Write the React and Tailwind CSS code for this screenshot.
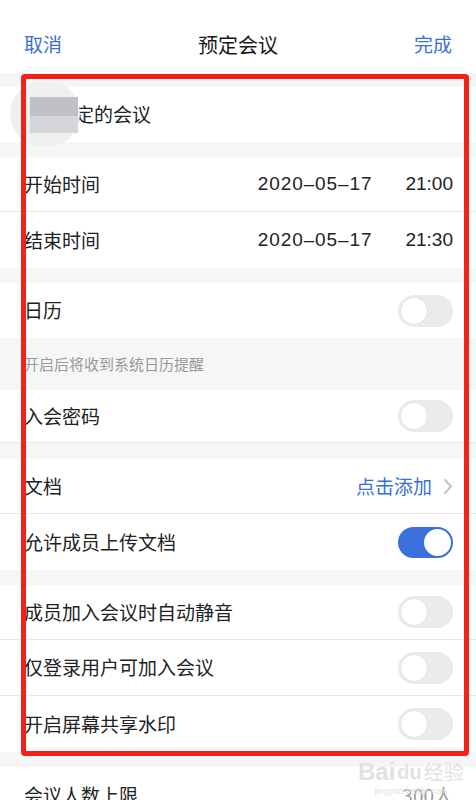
import React from 'react';

const font = { fontFamily: '"Noto Sans CJK SC", "Noto Sans", sans-serif' };
const latin = { fontFamily: '"Liberation Sans", "Noto Sans CJK SC", sans-serif' };

function Toggle({ on }) {
  return on ? (
    <div className="w-[55px] h-[31px] rounded-full bg-[#3b6fdc] flex items-center justify-end pr-[2px]">
      <div className="w-[27px] h-[27px] rounded-full bg-white" />
    </div>
  ) : (
    <div className="w-[55px] h-[32px] rounded-full bg-[#ebebed] flex items-center pl-[2px]">
      <div className="w-[28px] h-[28px] rounded-full bg-white border border-[#e3e3e3]" />
    </div>
  );
}

function Row({ h, label, divider, children }) {
  return (
    <div className={`${h} bg-white flex items-center justify-between pl-[24px] pr-[23px] ${divider ? 'border-b border-[#e8e8e8]' : ''}`}>
      <span className="text-[19px] text-[#222]">{label}</span>
      {children}
    </div>
  );
}

function DateTime({ date, time }) {
  return (
    <div className="flex gap-[33px] text-[19px] text-[#222]" style={latin}>
      <span className="tracking-[0.9px]">{date}</span>
      <span>{time}</span>
    </div>
  );
}

export default function App() {
  return (
    <div className="relative w-[476px] h-[800px] overflow-hidden bg-[#f6f6f7]" style={font}>
      {/* header */}
      <div className="h-[73px] bg-white pt-[16px] px-[24px] flex items-center justify-between">
        <span className="text-[19px] text-[#3a6fd8]">取消</span>
        <span className="text-[20px] text-[#1a1a1a]">预定会议</span>
        <span className="text-[19px] text-[#3a6fd8]">完成</span>
      </div>

      <div className="mt-[14px] relative h-[55px] bg-white flex items-center pl-[56px]">
        <div className="absolute left-[10px] top-[-6px] w-[70px] h-[66px] rounded-full bg-[#f0f0f1]" />
        <span className="text-[19px] text-[#222]">预定的会议</span>
        <div className="absolute left-[30px] top-[10px] w-[48px] h-[19px] bg-[#c0c0c5]" />
        <div className="absolute left-[30px] top-[29px] w-[48px] h-[17px] bg-[#d6d6da]" />
      </div>

      <div className="mt-[15px]">
        <Row h="h-[55px]" label="开始时间" divider>
          <DateTime date="2020–05–17" time="21:00" />
        </Row>
        <Row h="h-[56px]" label="结束时间">
          <DateTime date="2020–05–17" time="21:30" />
        </Row>
      </div>

      <div className="mt-[15px]">
        <Row h="h-[55px]" label="日历">
          <Toggle />
        </Row>
        <div className="h-[52px] flex items-center pl-[24px] text-[15px] text-[#999]">开启后将收到系统日历提醒</div>
        <Row h="h-[53px]" label="入会密码" divider>
          <Toggle />
        </Row>
      </div>

      <div className="mt-[16px]">
        <Row h="h-[55px]" label="文档" divider>
          <div className="flex items-center gap-[11px]">
            <span className="text-[19px] text-[#3a6fd8]">点击添加</span>
            <svg width="10" height="17" viewBox="0 0 10 17" fill="none">
              <path d="M2 2l6 6.5-6 6.5" stroke="#c4c4c6" strokeWidth="2" strokeLinecap="round" strokeLinejoin="round" />
            </svg>
          </div>
        </Row>
        <Row h="h-[56px]" label="允许成员上传文档">
          <Toggle on />
        </Row>
      </div>

      <div className="mt-[15px]">
        <Row h="h-[55px]" label="成员加入会议时自动静音" divider>
          <Toggle />
        </Row>
        <Row h="h-[56px]" label="仅登录用户可加入会议" divider>
          <Toggle />
        </Row>
        <Row h="h-[56px]" label="开启屏幕共享水印">
          <Toggle />
        </Row>
      </div>

      <div className="mt-[15px]">
        <Row h="h-[56px]" label="会议人数上限">
          <span className="text-[19px] text-[#999]">300人</span>
        </Row>
      </div>

      {/* watermark */}
      <div className="absolute left-[358px] top-[760px] flex flex-col items-center text-[#e2e2e2] leading-none">
        <div className="flex items-center gap-[2px] text-[24px] font-bold" style={latin}>
          <span>Bai</span>
          <span className="text-[20px]">du</span>
          <span className="text-[20px] font-normal" style={font}>经验</span>
        </div>
        <span className="text-[9px] mt-[3px]" style={latin}>jingyan.baidu.com</span>
      </div>

      {/* red annotation frame */}
      <div className="absolute left-[21px] top-[74px] w-[448px] h-[682px] border-[5px] border-[#f5201a] rounded-[4px]" />
    </div>
  );
}
